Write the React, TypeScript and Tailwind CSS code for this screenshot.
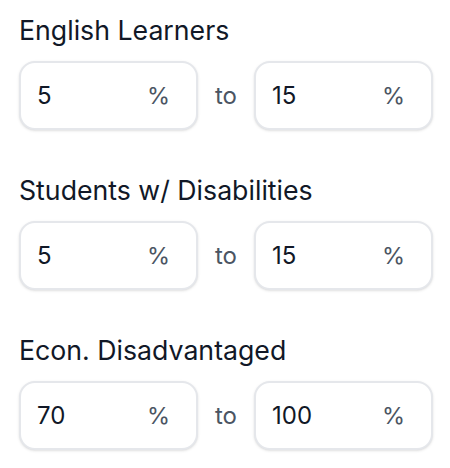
import { useState } from "react";

type Range = { label: string; min: string; max: string };

const initial: Range[] = [
  { label: "English Learners", min: "5", max: "15" },
  { label: "Students w/ Disabilities", min: "5", max: "15" },
  { label: "Econ. Disadvantaged", min: "70", max: "100" },
];

function PercentInput({ value, onChange }: { value: string; onChange: (v: string) => void }) {
  return (
    <div className="flex-1 h-[69px] flex items-center pl-[16px] pr-[26px] bg-white border-2 border-[#e5e7eb] rounded-[16px] shadow-sm">
      <input
        value={value}
        onChange={(e) => onChange(e.target.value)}
        className="w-full min-w-0 bg-transparent outline-none text-[24px] text-[#111827]"
      />
      <span className="text-[23.5px] text-[#4b5563]">%</span>
    </div>
  );
}

export default function App() {
  const [ranges, setRanges] = useState(initial);

  const update = (i: number, key: "min" | "max", v: string) => {
    setRanges((prev) => prev.map((r, idx) => (idx === i ? { ...r, [key]: v } : r)));
  };

  return (
    <div className="min-h-[468px] bg-white pl-[19px] pr-[17px] pt-[10px] font-['Inter',sans-serif]">
      {ranges.map((r, i) => (
        <div key={r.label} className="mb-[40px]">
          {/* Label */}
          <div className="text-[26.7px] leading-[40px] text-[#111827] mb-[11px]">{r.label}</div>

          {/* Range */}
          <div className="flex items-center gap-[17px]">
            <PercentInput value={r.min} onChange={(v) => update(i, "min", v)} />
            <span className="text-[24px] text-[#4b5563]">to</span>
            <PercentInput value={r.max} onChange={(v) => update(i, "max", v)} />
          </div>
        </div>
      ))}
    </div>
  );
}
